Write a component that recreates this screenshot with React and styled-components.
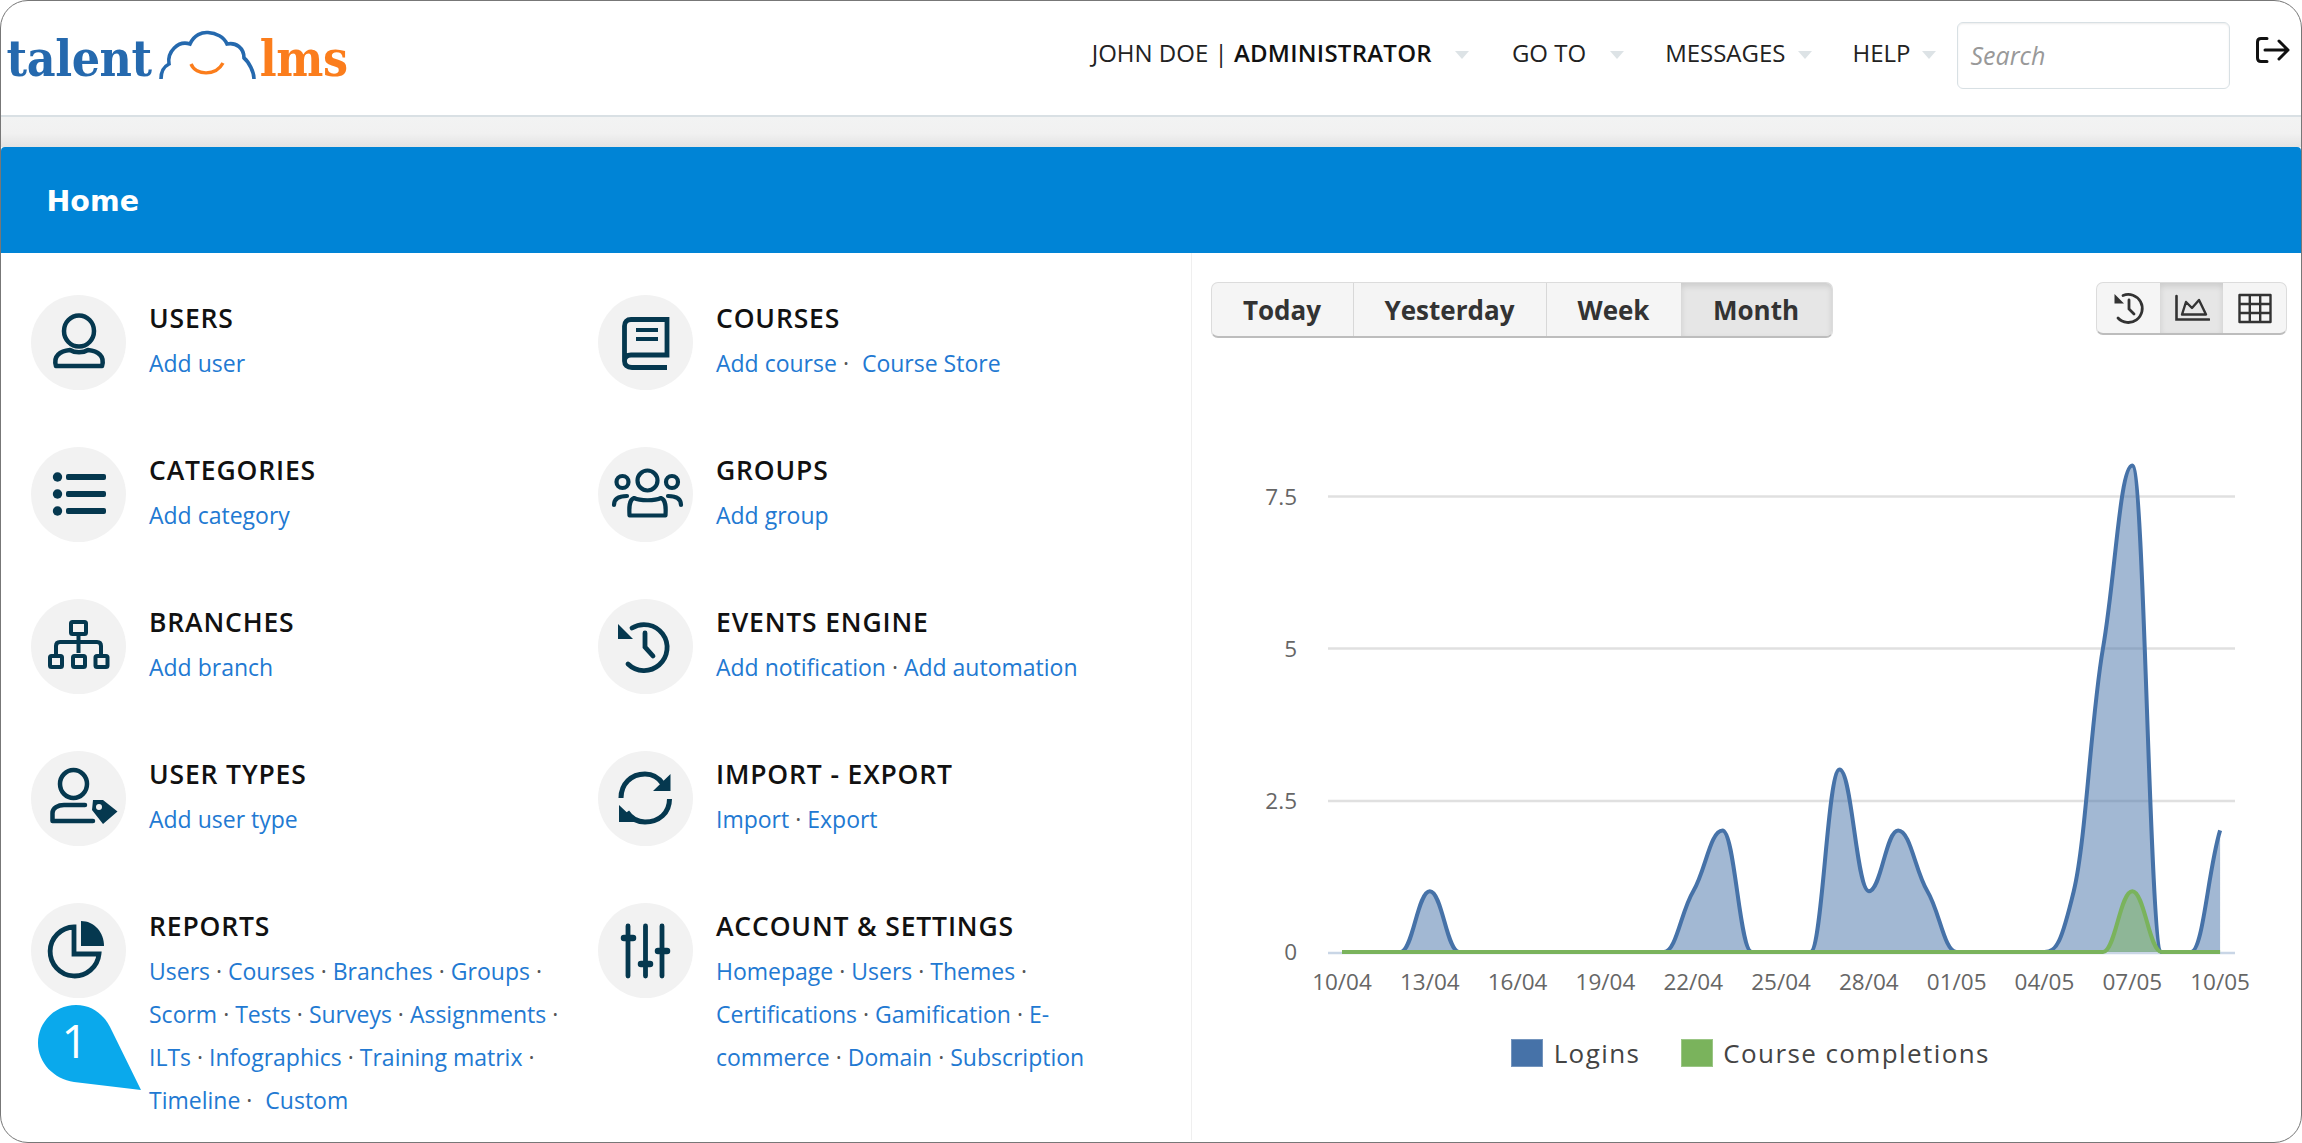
import React from 'react';
import styled, { createGlobalStyle } from 'styled-components';

const GlobalStyle = createGlobalStyle`
  html, body {
    margin: 0;
    background: #fff;
    overflow: hidden;
  }
  * {
    box-sizing: border-box;
  }
`;

const INK = '#05384f';

const Frame = styled.div`
  width: 2302px;
  height: 1143px;
  border: 1.5px solid #777;
  border-radius: 28px;
  overflow: hidden;
  position: relative;
  background: #fff;
  font-family: "Open Sans", "Liberation Sans", sans-serif;
`;

const Header = styled.header`
  height: 115.5px;
  border-bottom: 2px solid #d9e0e4;
  display: flex;
  align-items: center;
  padding: 0 10.5px 5px 0;
`;

const Logo = styled.div`
  display: flex;
  align-items: flex-end;
  margin-left: 5.5px;
  margin-top: 7px;
  font-family: "DejaVu Serif", serif;
  font-stretch: condensed;
  font-weight: 700;
  font-size: 49.5px;
  line-height: 60px;
  letter-spacing: -0.4px;
`;

const LogoWord = styled.span`
  color: ${(p) => p.$color};
`;

const Cloud = styled.svg`
  display: block;
  width: 104px;
  height: 52px;
  margin: 0 0 7px 4px;
`;

const Nav = styled.nav`
  margin-left: auto;
  display: flex;
  align-items: center;
`;

const NavItem = styled.div`
  display: flex;
  align-items: center;
  gap: ${(p) => p.$gap}px;
  margin-right: ${(p) => p.$after}px;
  font-size: 24px;
  line-height: 34px;
  color: #222;
  margin-top: -5px;
`;

const Strong = styled.span`
  font-weight: 600;
  color: #111;
  letter-spacing: 0.25px;
`;

const Caret = styled.span`
  width: 0;
  height: 0;
  border-left: 7.5px solid transparent;
  border-right: 7.5px solid transparent;
  border-top: 8px solid #dde3e6;
  margin-top: 4px;
`;

const Search = styled.div`
  width: 273px;
  height: 67px;
  border: 1.5px solid #d8e0e4;
  border-radius: 6px;
  box-shadow: inset 0 1px 2px rgba(0, 0, 0, 0.08);
  display: flex;
  align-items: center;
  padding-left: 13px;
  font-style: italic;
  font-size: 25px;
  color: #999;
`;

const Logout = styled.svg`
  display: block;
  width: 36px;
  height: 28px;
  margin-left: 25px;
  margin-top: -10px;
`;

const Band = styled.div`
  height: 30px;
  background: linear-gradient(#f2f3f3, #f1f1f1 55%, #e3e3e3);
`;

const TitleBar = styled.div`
  height: 106px;
  background: #0084d6;
  border-radius: 4px 4px 0 0;
  display: flex;
  align-items: center;
  padding: 4px 0 0 45.5px;
  color: #fff;
  font-family: "DejaVu Sans", sans-serif;
  font-weight: 700;
  font-size: 28.5px;
`;

const Main = styled.main`
  display: flex;
  height: 887px;
`;

const Shortcuts = styled.section`
  width: 1190.5px;
  border-right: 1.5px solid #efefef;
  padding: 42px 0 0 29.5px;
  display: grid;
  grid-template-columns: 567px 1fr;
  grid-auto-rows: 152px;
`;

const Item = styled.div`
  display: flex;
  gap: 23.5px;
`;

const IconCircle = styled.div`
  flex: none;
  width: 95px;
  height: 95px;
  border-radius: 50%;
  background: #f2f2f2;
`;

const Glyph = styled.svg`
  display: block;
  width: 95px;
  height: 95px;
  color: ${INK};
`;

const ItemBody = styled.div`
  width: ${(p) => p.$width}px;
  flex: none;
`;

const ItemTitle = styled.div`
  font-size: 26.5px;
  font-weight: 600;
  line-height: 46px;
  letter-spacing: 0.85px;
  color: #111;
`;

const Links = styled.div`
  font-size: 23px;
  line-height: 43.3px;
  margin-top: 1px;
  color: #555;
`;

const LinkText = styled.a`
  color: #2279d2;
  text-decoration: none;
`;

const Sep = styled.span`
  margin-right: ${(p) => (p.$wide ? 7 : 0)}px;
`;

const Pin = styled.div`
  position: absolute;
  left: 34.5px;
  top: 1002px;
  width: 108px;
  height: 90px;
`;

const PinShape = styled.svg`
  display: block;
  width: 108px;
  height: 90px;
`;

const PinNumber = styled.span`
  position: absolute;
  left: 26px;
  top: 6px;
  width: 24px;
  text-align: center;
  font-size: 46px;
  line-height: 62px;
  color: #fff;
`;

const Stats = styled.section`
  flex: 1;
  padding-top: 29px;
`;

const Toolbar = styled.div`
  display: flex;
  justify-content: space-between;
  align-items: flex-start;
  padding: 0 14px 0 19px;
`;

const ButtonGroup = styled.div`
  display: flex;
  height: ${(p) => p.$height}px;
  border: 1px solid #dcdcdc;
  border-bottom: 2px solid #bdbdbd;
  border-radius: 7px;
  background: #f5f5f5;
  overflow: hidden;
`;

const RangeButton = styled.div`
  width: ${(p) => p.$width}px;
  display: flex;
  align-items: center;
  justify-content: center;
  padding-top: 2px;
  font-size: 26px;
  font-weight: 700;
  color: #333;
  border-left: ${(p) => (p.$first || p.$active ? 'none' : '1px solid #d8d8d8')};
  background: ${(p) => (p.$active ? '#e6e6e6' : 'transparent')};
  box-shadow: ${(p) => (p.$active ? 'inset 0 3px 6px rgba(0, 0, 0, 0.12)' : 'none')};
`;

const ViewButton = styled.div`
  width: 63px;
  display: flex;
  align-items: center;
  justify-content: center;
  background: ${(p) => (p.$active ? '#e6e6e6' : 'transparent')};
  box-shadow: ${(p) => (p.$active ? 'inset 0 3px 6px rgba(0, 0, 0, 0.12)' : 'none')};
`;

const ViewIcon = styled.svg`
  display: block;
  width: 36px;
  height: 34px;
  color: #333;
`;

const Chart = styled.svg`
  display: block;
  width: 1109px;
  height: 560px;
  margin-top: 103px;
`;

const AxisLabel = styled.text`
  font-family: "Open Sans", sans-serif;
  font-size: 22.5px;
  fill: #666;
`;

const Legend = styled.div`
  display: flex;
  justify-content: center;
  align-items: center;
  margin-top: 34.5px;
  padding-left: 8px;
  font-size: 26px;
  letter-spacing: 1.4px;
  color: #444;
`;

const Swatch = styled.span`
  width: 32px;
  height: 28px;
  margin: ${(p) => (p.$second ? '0 10px 0 41px' : '0 11px 0 0')};
  background: ${(p) => p.$color};
  border: 1px solid rgba(255, 255, 255, 0.25);
`;

// icons are drawn on the 95px circle
const ICONS = {
  users: (
    <g fill="none" stroke="currentColor" strokeWidth="4.5" strokeLinejoin="round">
      <ellipse cx="48" cy="36" rx="15" ry="15.5" />
      <path d="M25 71 C22 61 29 56 39 55 C44 58 52 58 57 55 C67 56 74 61 71 71 Z" />
    </g>
  ),
  courses: (
    <g fill="none" stroke="currentColor" strokeWidth="4.8">
      <path d="M69 72.5 H34 C29 72.5 26.5 70 26.5 66 V31 C26.5 27 29 24.5 33 24.5 H69 V60 H33 C29 60 26.5 62 26.5 66" />
      <path d="M38 35 H60 M38 44 H60" strokeWidth="4" />
    </g>
  ),
  categories: (
    <g fill="currentColor">
      <circle cx="26.5" cy="30" r="4.7" />
      <circle cx="26.5" cy="47" r="4.7" />
      <circle cx="26.5" cy="64" r="4.7" />
      <rect x="35" y="27" width="40" height="6" rx="2" />
      <rect x="35" y="44" width="40" height="6" rx="2" />
      <rect x="35" y="61" width="40" height="6" rx="2" />
    </g>
  ),
  groups: (
    <g fill="none" stroke="currentColor" strokeWidth="4.2" strokeLinecap="round" strokeLinejoin="round">
      <circle cx="49.5" cy="33.5" r="10" />
      <circle cx="24.5" cy="35" r="6" />
      <circle cx="74" cy="35" r="6" />
      <path d="M36 51 C31 53 31 60 31.5 68.5 H67.5 C68 60 68 53 63 51 C57 54 42 54 36 51 Z" />
      <path d="M16 58 C16 52 21 49 29 49 M83 58 C83 52 78 49 70 49" />
    </g>
  ),
  branches: (
    <g fill="none" stroke="currentColor" strokeWidth="4" strokeLinejoin="round">
      <rect x="40" y="23" width="15" height="12" rx="1.5" />
      <path d="M47.5 35 V54 M25 55 V47 Q25 43 29 43 H66 Q70 43 70 47 V55" />
      <rect x="19" y="57" width="12" height="11" rx="1.5" />
      <rect x="42" y="57" width="12" height="11" rx="1.5" />
      <rect x="64.5" y="57" width="12" height="11" rx="1.5" />
    </g>
  ),
  events: (
    <g>
      <path d="M34 29 A23 23 0 1 1 30 65 M47 34 V48 L55 57" fill="none" stroke="currentColor" strokeWidth="4.8" strokeLinecap="round" />
      <path d="M20 25 V40 H35 Z" fill="currentColor" />
    </g>
  ),
  types: (
    <g>
      <ellipse cx="42.5" cy="33" rx="13.5" ry="14" fill="none" stroke="currentColor" strokeWidth="4.5" />
      <path d="M62 70 H21.5 V62 C21.5 57 27 54 33 54 H54" fill="none" stroke="currentColor" strokeWidth="4.5" strokeLinecap="round" strokeLinejoin="round" />
      <path fillRule="evenodd" fill="currentColor" d="M62 49 H72 L86.5 60.5 L72 73 L61 59 Z M68 53 A3 3 0 1 0 68 59 A3 3 0 1 0 68 53 Z" />
    </g>
  ),
  imports: (
    <g>
      <path d="M23 47 C23 33 33 23 47 23 C55 23 61 27 65 33 M71.5 48 C71.5 62 61 71 47 71 C39 71 33 67 29 61" fill="none" stroke="currentColor" strokeWidth="5" />
      <path d="M72.5 23 V40 H55 Z M21 54 V71 H39 Z" fill="currentColor" />
    </g>
  ),
  reports: (
    <g>
      <path d="M43 24 A24.5 24.5 0 1 0 68 51 H43 Z" fill="none" stroke="currentColor" strokeWidth="4.8" />
      <path d="M50 18 C63 18 73 29 73 43 H50 Z" fill="currentColor" />
    </g>
  ),
  settings: (
    <g stroke="currentColor" strokeLinecap="round">
      <path d="M30 23 V73 M47.5 23 V73 M64 23 V73" strokeWidth="4.8" />
      <path d="M26 35 H35 M43 61 H52 M60 48 H69" strokeWidth="6.5" />
    </g>
  ),
};

const ITEMS = [
  { key: 'users', title: 'USERS', links: ['Add user'] },
  { key: 'courses', title: 'COURSES', links: ['Add course', 'Course Store'], wide: true },
  { key: 'categories', title: 'CATEGORIES', links: ['Add category'] },
  { key: 'groups', title: 'GROUPS', links: ['Add group'] },
  { key: 'branches', title: 'BRANCHES', links: ['Add branch'] },
  { key: 'events', title: 'EVENTS ENGINE', links: ['Add notification', 'Add automation'] },
  { key: 'types', title: 'USER TYPES', links: ['Add user type'] },
  { key: 'imports', title: 'IMPORT - EXPORT', links: ['Import', 'Export'] },
  {
    key: 'reports',
    title: 'REPORTS',
    links: ['Users', 'Courses', 'Branches', 'Groups', 'Scorm', 'Tests', 'Surveys', 'Assignments', 'ILTs', 'Infographics', 'Training matrix', 'Timeline', 'Custom'],
    wide: true,
  },
  {
    key: 'settings',
    title: 'ACCOUNT & SETTINGS',
    links: ['Homepage', 'Users', 'Themes', 'Certifications', 'Gamification', 'E-commerce', 'Domain', 'Subscription'],
  },
];

const X0 = 1342;
const STEP = 29.27;
const BASE = 951;
const UNIT = 60.8;

const LOGINS = [0, 0, 0, 1, 0, 0, 0, 0, 0, 0, 0, 0, 1, 2, 0, 0, 0, 3, 1, 2, 1, 0, 0, 0, 0, 1, 5, 8, 0, 0, 2];
const COMPLETIONS = LOGINS.map((_, i) => (i === 27 ? 1 : 0));

const px = (i) => X0 + i * STEP;
const py = (v) => BASE - v * UNIT;

// flat tangents at the turning points, so the curve never dips below zero
const smoothPath = (data) => {
  const slopes = data.slice(1).map((v, i) => v - data[i]);
  const tangent = (i) => {
    if (i === 0) return slopes[0];
    if (i === data.length - 1) return slopes[i - 1];
    const a = slopes[i - 1];
    const b = slopes[i];
    if (a * b <= 0) return 0;
    return (a + b) / 2;
  };
  let d = `M${px(0)} ${py(data[0])}`;
  for (let i = 0; i < data.length - 1; i++) {
    const c1 = data[i] + tangent(i) / 3;
    const c2 = data[i + 1] - tangent(i + 1) / 3;
    d += ` C${px(i) + STEP * 0.42} ${py(c1)} ${px(i + 1) - STEP * 0.42} ${py(c2)} ${px(i + 1)} ${py(data[i + 1])}`;
  }
  return d;
};

const closeArea = (d) => `${d} L${px(30)} ${BASE} L${px(0)} ${BASE} Z`;

const DATES = ['10/04', '13/04', '16/04', '19/04', '22/04', '25/04', '28/04', '01/05', '04/05', '07/05', '10/05'];

const GRID = [
  { label: '7.5', y: 495.5 },
  { label: '5', y: 647.5 },
  { label: '2.5', y: 800 },
];

function LinkList({ links, wide }) {
  return links.map((text, i) => {
    const last = i === links.length - 1;
    return (
      <React.Fragment key={text}>
        <LinkText>{text}</LinkText>
        {!last && <Sep $wide={wide && i === links.length - 2}> · </Sep>}
      </React.Fragment>
    );
  });
}

function SalesChart() {
  const logins = smoothPath(LOGINS);
  const completions = smoothPath(COMPLETIONS);
  return (
    <Chart viewBox="1192 440 1109 560">
      {GRID.map((g) => (
        <g key={g.label}>
          <line x1="1328" x2="2235" y1={g.y} y2={g.y} stroke="#e0e0e0" strokeWidth="2.5" />
          <AxisLabel x="1297" y={g.y + 8} textAnchor="end">{g.label}</AxisLabel>
        </g>
      ))}
      <line x1="1328" x2="2235" y1={BASE + 1} y2={BASE + 1} stroke="#c9d6e6" strokeWidth="2.5" />
      <AxisLabel x="1297" y={BASE + 8} textAnchor="end">0</AxisLabel>
      <path d={closeArea(logins)} fill="#4672a8" fillOpacity="0.5" />
      <path d={logins} fill="none" stroke="#4672a8" strokeWidth="4" />
      <path d={closeArea(completions)} fill="#7ab35c" fillOpacity="0.5" />
      <path d={completions} fill="none" stroke="#7ab35c" strokeWidth="4" />
      {DATES.map((date, i) => (
        <AxisLabel key={date + i} x={px(i * 3)} y="988.5" textAnchor="middle">{date}</AxisLabel>
      ))}
    </Chart>
  );
}

export default function App() {
  return (
    <Frame>
      <GlobalStyle />
      <Header>
        <Logo>
          <LogoWord $color="#2569ae">talent</LogoWord>
          <Cloud viewBox="0 0 104 52">
            <path d="M5 49 C5 41 9 36 13 34 C11 22 22 10 34 14 C38 5 46 2 52 2.5 C60 3 68 7 71 14 C80 12 88 18 88 28 C93 32 98 42 98 49" fill="none" stroke="#2569ae" strokeWidth="3.6" />
            <path d="M35 34 C40 46 60 46 67 33" fill="none" stroke="#fb7d1c" strokeWidth="3.4" />
          </Cloud>
          <LogoWord $color="#fb7d1c">lms</LogoWord>
        </Logo>
        <Nav>
          <NavItem $gap={23} $after={43}>
            <span>JOHN DOE | <Strong>ADMINISTRATOR</Strong></span>
            <Caret />
          </NavItem>
          <NavItem $gap={24} $after={41}>GO TO<Caret /></NavItem>
          <NavItem $gap={12} $after={41}>MESSAGES<Caret /></NavItem>
          <NavItem $gap={11} $after={21}>HELP<Caret /></NavItem>
          <Search>Search</Search>
          <Logout viewBox="0 0 36 28">
            <path d="M12 2.5 H6 Q2.5 2.5 2.5 6 V22 Q2.5 25.5 6 25.5 H12 M10 14 H33 M24 5 L33 14 L24 23" fill="none" stroke="#111" strokeWidth="3" strokeLinecap="round" strokeLinejoin="round" />
          </Logout>
        </Nav>
      </Header>
      <Band />
      <TitleBar>Home</TitleBar>
      <Main>
        <Shortcuts>
          {ITEMS.map((item, index) => (
            <Item key={item.key}>
              <IconCircle>
                <Glyph viewBox="0 0 95 95">{ICONS[item.key]}</Glyph>
              </IconCircle>
              <ItemBody $width={index % 2 === 0 ? 420 : 400}>
                <ItemTitle>{item.title}</ItemTitle>
                <Links>
                  <LinkList links={item.links} wide={item.wide} />
                </Links>
              </ItemBody>
            </Item>
          ))}
        </Shortcuts>
        <Stats>
          <Toolbar>
            <ButtonGroup $height={56}>
              <RangeButton $first $width={141}>Today</RangeButton>
              <RangeButton $width={193}>Yesterday</RangeButton>
              <RangeButton $width={135}>Week</RangeButton>
              <RangeButton $active $width={151}>Month</RangeButton>
            </ButtonGroup>
            <ButtonGroup $height={53}>
              <ViewButton>
                <ViewIcon viewBox="0 0 36 34">
                  <path d="M12 4.5 A14 14 0 1 1 7 27 M18 9 V18 L23 23" fill="none" stroke="currentColor" strokeWidth="2.8" strokeLinecap="round" />
                  <path d="M3.5 3 V12.5 H13 Z" fill="currentColor" />
                </ViewIcon>
              </ViewButton>
              <ViewButton $active>
                <ViewIcon viewBox="0 0 36 34">
                  <path d="M2.5 5 V28.5 H35" fill="none" stroke="currentColor" strokeWidth="2.6" strokeLinecap="round" />
                  <path d="M8 23.5 L12 11 L18 17 L25 9 L32 23.5 Z" fill="none" stroke="currentColor" strokeWidth="2.4" strokeLinejoin="round" />
                </ViewIcon>
              </ViewButton>
              <ViewButton>
                <ViewIcon viewBox="0 0 36 34">
                  <path d="M2.5 4 H33.5 V31 H2.5 Z M12.8 4 V31 M23.2 4 V31 M2.5 13 H33.5 M2.5 22 H33.5" fill="none" stroke="currentColor" strokeWidth="2.4" strokeLinejoin="round" />
                </ViewIcon>
              </ViewButton>
            </ButtonGroup>
          </Toolbar>
          <SalesChart />
          <Legend>
            <Swatch $color="#4672a8" />
            Logins
            <Swatch $second $color="#7ab35c" />
            Course completions
          </Legend>
        </Stats>
      </Main>
      <Pin>
        <PinShape viewBox="0 0 108 90">
          <path d="M40 2 C58 2 70 14 76 28 L105 87 L38 79 C18 76 2 60 2 40 C2 19 19 2 40 2 Z" fill="#0aa9ec" />
        </PinShape>
        <PinNumber>1</PinNumber>
      </Pin>
    </Frame>
  );
}
